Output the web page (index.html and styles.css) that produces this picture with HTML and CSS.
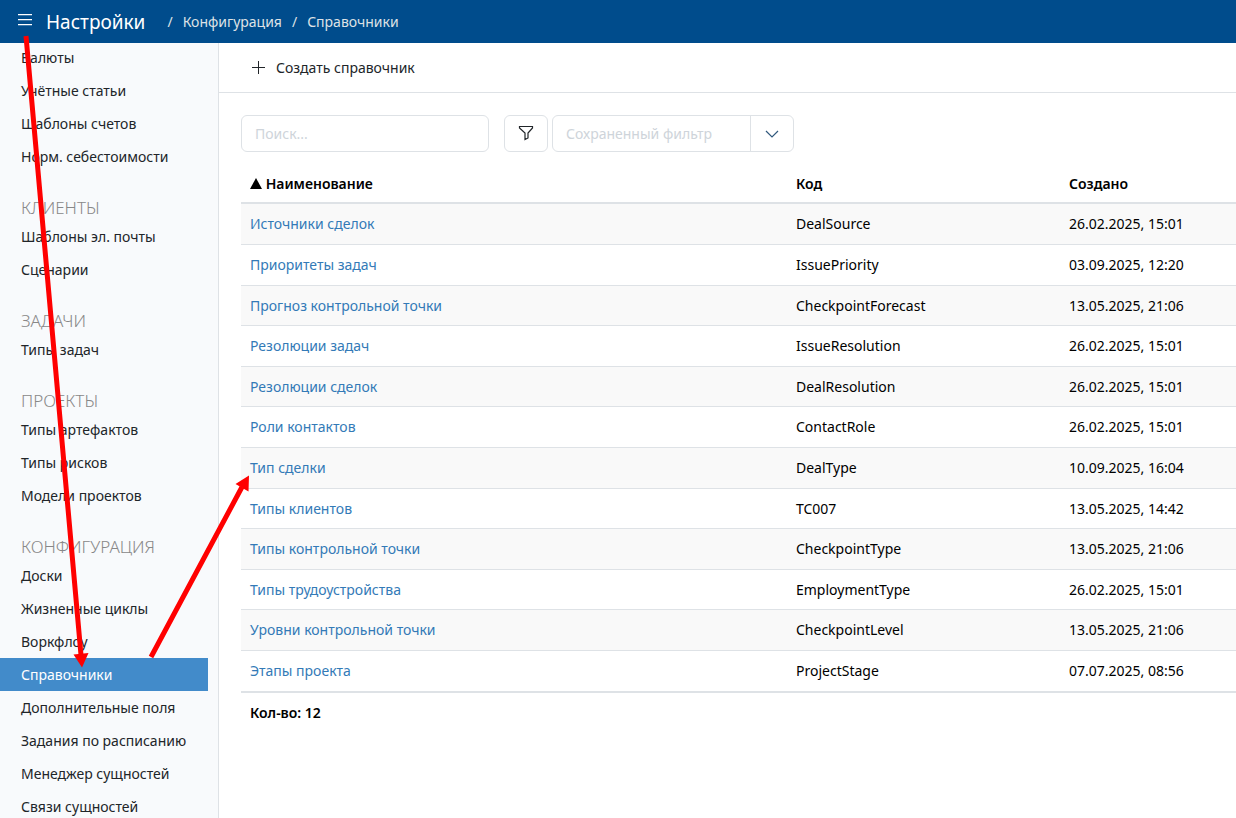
FILE: index.html
```
<!DOCTYPE html>
<html lang="ru">
<head>
  <meta charset="UTF-8" />
  <meta name="viewport" content="width=device-width, initial-scale=1" />
  <title>Настройки / Справочники</title>
  <link rel="stylesheet" href="styles.css">
</head>

<body>
  <header class="topbar">
    <button class="menu-button" type="button" aria-label="Меню">
      <svg width="14" height="12" viewBox="0 0 14 12" stroke="currentColor" stroke-width="1.3">
        <path d="M0 .7h14M0 5.700h14M0 10.700h14" />
      </svg>
    </button>
    <h1 class="page-title">Настройки</h1>
    <nav class="breadcrumbs">
      <span>/</span>
      <a href="#config">Конфигурация</a>
      <span>/</span>
      <a href="#dictionaries">Справочники</a>
    </nav>
  </header>

  <div class="layout">
    <!-- Sidebar -->
    <nav class="sidebar">
      <ul class="menu">
        <li><a href="#">Валюты</a></li>
        <li><a href="#">Учётные статьи</a></li>
        <li><a href="#">Шаблоны счетов</a></li>
        <li><a href="#">Норм. себестоимости</a></li>
      </ul>
      <h2>Клиенты</h2>
      <ul class="menu">
        <li><a href="#">Шаблоны эл. почты</a></li>
        <li><a href="#">Сценарии</a></li>
      </ul>
      <h2>Задачи</h2>
      <ul class="menu">
        <li><a href="#">Типы задач</a></li>
      </ul>
      <h2>Проекты</h2>
      <ul class="menu">
        <li><a href="#">Типы артефактов</a></li>
        <li><a href="#">Типы рисков</a></li>
        <li><a href="#">Модели проектов</a></li>
      </ul>
      <h2>Конфигурация</h2>
      <ul class="menu">
        <li><a href="#">Доски</a></li>
        <li><a href="#">Жизненные циклы</a></li>
        <li><a href="#">Воркфлоу</a></li>
        <li><a href="#" class="active">Справочники</a></li>
        <li><a href="#">Дополнительные поля</a></li>
        <li><a href="#">Задания по расписанию</a></li>
        <li><a href="#">Менеджер сущностей</a></li>
        <li><a href="#">Связи сущностей</a></li>
      </ul>
    </nav>

    <main class="content">
      <div class="toolbar">
        <button class="create-button" type="button">
          <svg width="13" height="13" viewBox="0 0 13 13" stroke="currentColor" stroke-width="1">
            <path d="M6.500 0v13M0 6.500h13" />
          </svg>
          Создать справочник
        </button>
      </div>

      <!-- Filters -->
      <div class="filters">
        <input class="search" type="text" placeholder="Поиск..." aria-label="Поиск" />
        <button class="filter-button" type="button" aria-label="Фильтр">
          <svg width="16" height="17" viewBox="0 0 16 17" fill="none" stroke="currentColor" stroke-width="1.2">
            <path d="M1.500 1.500h13v1.500L10 8V13L7 14.500V8L1.500 3z" />
          </svg>
        </button>
        <div class="saved-filter">
          <input type="text" placeholder="Сохраненный фильтр" aria-label="Сохраненный фильтр" />
          <button type="button" aria-label="Открыть список">
            <svg width="14" height="8" viewBox="0 0 14 8" fill="none" stroke="currentColor" stroke-width="1.2">
              <path d="M1 1l6 6 6-6" />
            </svg>
          </button>
        </div>
      </div>

      <table class="grid">
        <thead>
          <tr>
            <th class="col-name">
              <svg width="12" height="11" viewBox="0 0 12 11"><path d="M6 0l6 11H0z" /></svg>
              Наименование
            </th>
            <th class="col-code">Код</th>
            <th>Создано</th>
          </tr>
        </thead>
        <tbody>
          <tr><td><a href="#">Источники сделок</a></td><td>DealSource</td><td>26.02.2025, 15:01</td></tr>
          <tr><td><a href="#">Приоритеты задач</a></td><td>IssuePriority</td><td>03.09.2025, 12:20</td></tr>
          <tr><td><a href="#">Прогноз контрольной точки</a></td><td>CheckpointForecast</td><td>13.05.2025, 21:06</td></tr>
          <tr><td><a href="#">Резолюции задач</a></td><td>IssueResolution</td><td>26.02.2025, 15:01</td></tr>
          <tr><td><a href="#">Резолюции сделок</a></td><td>DealResolution</td><td>26.02.2025, 15:01</td></tr>
          <tr><td><a href="#">Роли контактов</a></td><td>ContactRole</td><td>26.02.2025, 15:01</td></tr>
          <tr><td><a href="#">Тип сделки</a></td><td>DealType</td><td>10.09.2025, 16:04</td></tr>
          <tr><td><a href="#">Типы клиентов</a></td><td>TC007</td><td>13.05.2025, 14:42</td></tr>
          <tr><td><a href="#">Типы контрольной точки</a></td><td>CheckpointType</td><td>13.05.2025, 21:06</td></tr>
          <tr><td><a href="#">Типы трудоустройства</a></td><td>EmploymentType</td><td>26.02.2025, 15:01</td></tr>
          <tr><td><a href="#">Уровни контрольной точки</a></td><td>CheckpointLevel</td><td>13.05.2025, 21:06</td></tr>
          <tr><td><a href="#">Этапы проекта</a></td><td>ProjectStage</td><td>07.07.2025, 08:56</td></tr>
        </tbody>
        <tfoot>
          <tr><td colspan="3">Кол-во: 12</td></tr>
        </tfoot>
      </table>
    </main>
  </div>

  <!-- Hint arrows: menu -> Справочники -> Тип сделки -->
  <svg class="hints" width="260" height="680" viewBox="0 0 260 680" fill="#f00" stroke="#f00" aria-hidden="true">
    <path d="M26 36L81 655M151 657L242 487" fill="none" stroke-width="5" />
    <path d="M73.500 654.500L88.500 653L82 667.500zM235.500 484L249 475.500L248.500 491.500z" stroke="none" />
  </svg>
</body>
</html>
```
FILE: styles.css
```
* {
  margin: 0;
  padding: 0;
  box-sizing: border-box;
}

body {
  font-family: "Segoe UI", "Noto Sans", sans-serif;
  font-size: 14px;
  line-height: 20px;
  color: #212529;
  background-color: #fff;
  height: 100vh;
  display: flex;
  flex-direction: column;
  overflow: hidden;
  position: relative;
}

a {
  color: inherit;
  text-decoration: none;
}

ul {
  list-style: none;
}

button,
input {
  font: inherit;
  color: inherit;
  background: none;
  border: none;
}

button {
  cursor: pointer;
}

svg {
  display: block;
}

/* Top bar */
.topbar {
  flex: none;
  height: 43px;
  padding-left: 18px;
  display: flex;
  align-items: center;
  background-color: #004c8c;
  color: #fff;
}

.menu-button {
  padding-bottom: 4px;
}

.page-title {
  margin-left: 14px;
  font-size: 19px;
  font-weight: 400;
}

.breadcrumbs {
  margin-left: 22px;
  display: flex;
  gap: 10px;
  color: #dee2e6;
}

.layout {
  flex: 1;
  min-height: 0;
  display: flex;
}

/* Sidebar */
.sidebar {
  flex: none;
  width: 219px;
  padding-right: 10px;
  background-color: #f8fafc;
  border-right: 1px solid #dee2e6;
  overflow: hidden;
}

.sidebar h2 {
  padding: 22px 0 0 21px;
  font-size: 17px;
  font-weight: 300;
  line-height: 25px;
  text-transform: uppercase;
  color: #888;
}

.menu:first-child {
  margin-top: -2px;
}

.menu a {
  display: block;
  padding-left: 21px;
  line-height: 33px;
}

.menu .active {
  background-color: #428bca;
  color: #fff;
}

/* Content */
.content {
  flex: 1;
  min-width: 0;
}

.toolbar {
  height: 50px;
  padding-left: 33px;
  display: flex;
  align-items: center;
  border-bottom: 1px solid #dee2e6;
}

.create-button {
  display: flex;
  align-items: center;
  gap: 11px;
}

.filters {
  display: flex;
  padding: 22px 0 0 22px;
}

.search,
.filter-button,
.saved-filter {
  height: 37px;
  border: 1px solid #dee2e6;
  border-radius: 6px;
}

.search {
  width: 248px;
  padding: 0 13px;
}

input::placeholder {
  color: #ced4da;
  opacity: 1;
}

.filter-button {
  width: 44px;
  margin: 0 4px 0 15px;
  display: flex;
  align-items: center;
  justify-content: center;
}

.saved-filter {
  width: 242px;
  display: flex;
}

.saved-filter input {
  flex: 1;
  min-width: 0;
  padding: 0 13px;
}

.saved-filter button {
  width: 43px;
  display: flex;
  align-items: center;
  justify-content: center;
  border-left: 1px solid #dee2e6;
  color: #31597d;
}

/* Table */
.grid {
  width: calc(100% - 22px);
  margin: 11px 0 0 22px;
  table-layout: fixed;
  border-collapse: separate;
  border-spacing: 0;
  color: #000;
}

.grid th,
.grid td {
  height: 41px;
  padding: 0 9px;
  text-align: left;
  white-space: nowrap;
  border-bottom: 1px solid #dee2e6;
}

.grid th {
  padding-top: 2px;
  font-weight: 600;
  border-bottom-width: 2px;
}

.grid th svg {
  display: inline-block;
}

.col-name {
  width: 546px;
}

.col-code {
  width: 273px;
}

.grid tbody tr:nth-child(odd) {
  background-color: #f9f9f9;
}

.grid tbody tr:nth-child(5n) td,
.grid tbody tr:nth-child(5n + 3) td {
  height: 40px;
}

.grid tbody tr:last-child td {
  height: 42px;
  border-bottom-width: 2px;
}

.grid tbody a {
  color: #337ab7;
}

.grid tfoot td {
  height: 40px;
  font-weight: 600;
  border-bottom: none;
}

/* Arrows drawn over the page */
.hints {
  position: absolute;
  top: 0;
  left: 0;
  pointer-events: none;
}
```
